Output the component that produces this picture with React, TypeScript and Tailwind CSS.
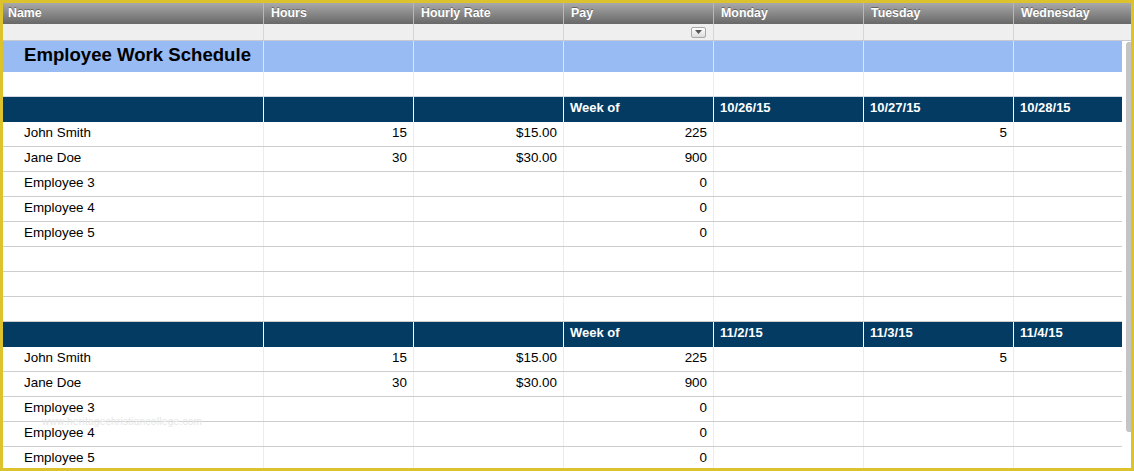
import React from "react";

const FONT = "font-['Liberation_Sans','Helvetica',Arial,sans-serif]";

type Cell = { text?: string; align?: "left" | "right" };

const BODY_COLS = "grid grid-cols-[260px_150px_150px_150px_150px_150px_109px]";
const HEAD_COLS = "grid grid-cols-[260px_150px_150px_150px_150px_150px_118px]";

function DataRow({ cells }: { cells: Cell[] }) {
  return (
    <div className={`${BODY_COLS} h-[25px] border-b border-[#cdcdcd] shrink-0`}>
      {cells.map((c, i) => (
        <div
          key={i}
          className={`flex items-center text-[13.4px] text-black leading-none pb-[2px] ${
            i > 0 ? "border-l border-[#ececec]" : ""
          } ${i === 0 ? "pl-[21px]" : "px-[6px]"} ${c.align === "right" ? "justify-end" : ""}`}
        >
          {c.text}
        </div>
      ))}
    </div>
  );
}

function BlueRow({ labels }: { labels: string[] }) {
  return (
    <div className={`${BODY_COLS} h-[25px] bg-[#033b63] shrink-0`}>
      {labels.map((l, i) => (
        <div
          key={i}
          className={`flex items-center text-[13px] font-bold text-white leading-none pb-[5px] ${
            i > 0 ? "border-l border-white" : ""
          } ${i === 0 ? "pl-[21px]" : "px-[6px]"}`}
        >
          {l}
        </div>
      ))}
    </div>
  );
}

function EmptyRow() {
  return <DataRow cells={[{}, {}, {}, {}, {}, {}, {}]} />;
}

function Week({ dates }: { dates: string[] }) {
  const rows: Cell[][] = [
    [{ text: "John Smith" }, { text: "15", align: "right" }, { text: "$15.00", align: "right" }, { text: "225", align: "right" }, {}, { text: "5", align: "right" }, {}],
    [{ text: "Jane Doe" }, { text: "30", align: "right" }, { text: "$30.00", align: "right" }, { text: "900", align: "right" }, {}, {}, {}],
    [{ text: "Employee 3" }, {}, {}, { text: "0", align: "right" }, {}, {}, {}],
    [{ text: "Employee 4" }, {}, {}, { text: "0", align: "right" }, {}, {}, {}],
    [{ text: "Employee 5" }, {}, {}, { text: "0", align: "right" }, {}, {}, {}],
  ];
  return (
    <>
      <BlueRow labels={["", "", "", "Week of", ...dates]} />
      {rows.map((r, i) => (
        <DataRow key={i} cells={r} />
      ))}
    </>
  );
}

export default function App() {
  const headers = ["Name", "Hours", "Hourly Rate", "Pay", "Monday", "Tuesday", "Wednesday"];
  return (
    <div className={`w-[1134px] h-[471px] bg-[#dcc22c] p-[3px] ${FONT}`}>
      <div className="w-[1128px] h-[465px] bg-white overflow-hidden flex flex-col relative">
        {/* Column header */}
        <div className={`${HEAD_COLS} h-[21px] shrink-0 bg-linear-to-b from-[#a9a9a9] via-[#888888] to-[#686868]`}>
          {headers.map((h, i) => (
            <div
              key={h}
              className={`flex items-center text-[12.4px] font-bold text-white leading-none [text-shadow:0_-1px_0_rgba(0,0,0,0.35)] ${
                i > 0 ? "border-l border-[#b9b9b9] pl-[7px]" : "pl-[5px]"
              }`}
            >
              {h}
            </div>
          ))}
        </div>
        {/* Filter row */}
        <div className={`${HEAD_COLS} h-[17px] shrink-0 bg-[#efefef] border-b border-[#c5cad2]`}>
          {headers.map((h, i) => (
            <div
              key={h}
              className={`flex items-center justify-end pr-[7px] ${i > 0 ? "border-l border-[#d6d6d6]" : ""}`}
            >
              {i === 3 && (
                <div className="w-[15px] h-[11px] rounded-[2px] border border-[#a8a8a8] bg-linear-to-b from-white to-[#dcdcdc] flex items-center justify-center">
                  <svg width="7" height="4" viewBox="0 0 7 4">
                    <path d="M0 0 L7 0 L3.5 4 Z" fill="#555" />
                  </svg>
                </div>
              )}
            </div>
          ))}
        </div>
        {/* Body */}
        <div className="flex flex-1 min-h-0">
          <div className="w-[1119px] flex flex-col shrink-0">
            <div className={`${BODY_COLS} h-[31px] bg-[#97bbf2] shrink-0`}>
              {headers.map((h, i) => (
                <div
                  key={h}
                  className={`flex items-center ${i > 0 ? "border-l border-[#d8e5fa]" : "pl-[21px]"}`}
                >
                  {i === 0 && (
                    <span className="text-[18.6px] font-bold text-black leading-none pb-[2px]">
                      Employee Work Schedule
                    </span>
                  )}
                </div>
              ))}
            </div>
            <div className={`${BODY_COLS} h-[25px] border-b border-[#d3d9e2] shrink-0`}>
              {headers.map((h, i) => (
                <div key={h} className={i > 0 ? "border-l border-[#ececec]" : ""} />
              ))}
            </div>
            <Week dates={["10/26/15", "10/27/15", "10/28/15"]} />
            <EmptyRow />
            <EmptyRow />
            <EmptyRow />
            <Week dates={["11/2/15", "11/3/15", "11/4/15"]} />
          </div>
          <div className="w-[9px] pl-[4px] pt-[1px] shrink-0">
            <div className="w-[5px] h-[390px] rounded-l-[3px] bg-[#c4c4c4]" />
          </div>
        </div>
        <div className="absolute left-[39px] top-[414px] text-[10px] text-[#e6e6e6] leading-none tracking-[0.3px] pointer-events-none">
          www.heritagechristiancollege.com
        </div>
      </div>
    </div>
  );
}
